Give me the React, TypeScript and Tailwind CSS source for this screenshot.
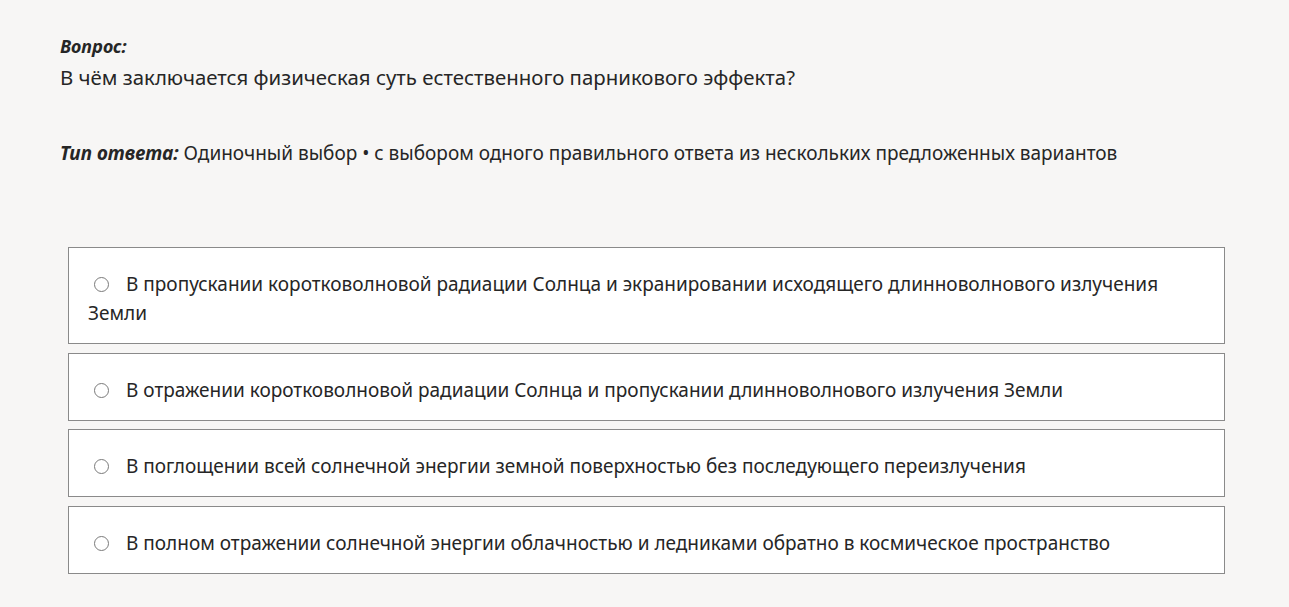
import React from "react";

const options = [
  "В пропускании коротковолновой радиации Солнца и экранировании исходящего длинноволнового излучения Земли",
  "В отражении коротковолновой радиации Солнца и пропускании длинноволнового излучения Земли",
  "В поглощении всей солнечной энергии земной поверхностью без последующего переизлучения",
  "В полном отражении солнечной энергии облачностью и ледниками обратно в космическое пространство",
];

export default function App() {
  return (
    <div
      className="min-h-[607px] w-full bg-[#f7f6f5] text-[#262626] text-[19px] leading-[29px] pl-[60px] pr-[64px] pt-[32px]"
      style={{ fontFamily: '"Noto Sans", "Open Sans", sans-serif' }}
    >
      <div className="font-bold italic text-[18px]">Вопрос:</div>
      <div className="mt-[2px] text-[20.4px]">В чём заключается физическая суть естественного парникового эффекта?</div>
      <div className="mt-[47px]">
        <span className="font-bold italic text-[19px]">Тип ответа:</span>{" "}
        Одиночный выбор • с выбором одного правильного ответа из нескольких предложенных вариантов
      </div>
      <div className="mt-[79px] ml-[8px] flex flex-col gap-[8.5px]">
        {options.map((o, i) => (
          <div
            key={i}
            className="bg-white border border-[#8a8a8a] pl-[19px] pr-[20px] pt-[22px] pb-[15px]"
          >
            <span className="inline-block w-[15px] h-[15px] rounded-full border-[1.5px] border-[#7a7a7a] ml-[6px] mr-[17px] align-[-1px]"></span>
            {o}
          </div>
        ))}
      </div>
    </div>
  );
}
